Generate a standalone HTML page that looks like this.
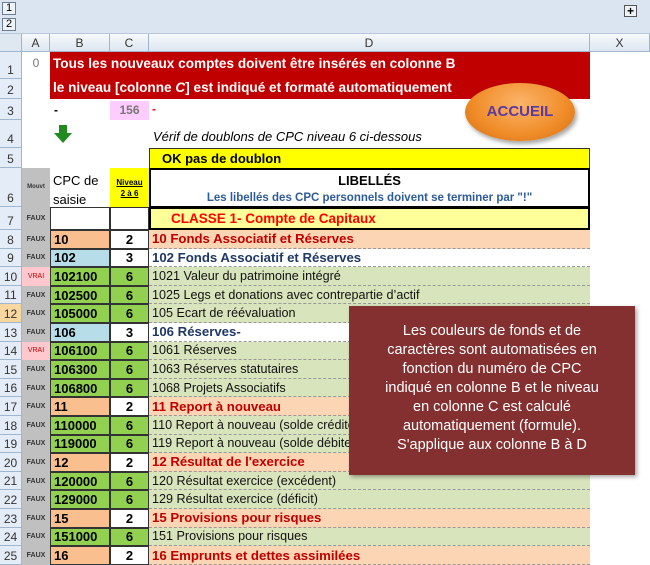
<!DOCTYPE html>
<html><head><meta charset="utf-8"><style>
*{margin:0;padding:0;box-sizing:border-box}
body{width:650px;height:565px;overflow:hidden;background:#fff;font-family:"Liberation Sans",Arial,sans-serif;position:relative}
.a{position:absolute}
.top{left:0;top:0;width:650px;height:34px;background:#dbe5f1;border-bottom:1px solid #b8c8dc}
.ob{position:absolute;left:2px;width:14px;height:13px;border:1px solid #6b7c93;background:#eef3f9;font-size:11px;text-align:center;line-height:11px}
.ch{top:34px;height:18px;background:linear-gradient(#f7f9fc,#dde6f1);border-right:1px solid #9eb6ce;border-bottom:1px solid #9eb6ce;font-size:12px;color:#333;text-align:center;line-height:18px}
.rh{left:0;width:22px;background:#e4ecf7;border-bottom:1px solid #9eb6ce;border-right:1px solid #9eb6ce;font-size:12px;color:#333;text-align:center;display:flex;align-items:flex-end;justify-content:center;padding-bottom:1px}
.A{left:22px;width:28px;background:#c0c0c0;font-size:7px;color:#333;text-align:center;font-weight:bold}
.B{left:50px;width:60px;border:1px solid #333;font-size:13px;font-weight:bold;padding-left:3px}
.C{left:110px;width:39px;border:1px solid #333;background:#fff;font-size:13px;font-weight:bold;text-align:center}
.D{left:149px;width:441px;border-bottom:1px dashed #999;font-size:12.6px;padding-left:3px;white-space:nowrap}
.r{display:flex;align-items:center}
.g{background:#92d050}.bl{background:#b7dee8}.o{background:#fabf8f}
.dg{background:#d8e4bc;color:#111}.do{background:#fcd5b4;color:#c00000;font-weight:bold;font-size:13.2px}.dw{background:#fff;color:#1f3864;font-weight:bold;font-size:13.2px}
</style></head><body>
<div class="a top"></div>
<div class="ob" style="top:2px">1</div>
<div class="ob" style="top:18px">2</div>
<div class="a" style="left:624px;top:5px;width:13px;height:12px;border:1px solid #555;background:#eef3f9;font-size:12px;line-height:10px;text-align:center;font-weight:bold">+</div>

<div class="a ch" style="left:0;width:22px;background:#dfe7f1"></div>
<div class="a ch" style="left:22px;width:28px">A</div>
<div class="a ch" style="left:50px;width:60px">B</div>
<div class="a ch" style="left:110px;width:39px">C</div>
<div class="a ch" style="left:149px;width:441px">D</div>
<div class="a ch" style="left:590px;width:60px">X</div>

<div class="a rh" style="top:52px;height:27px">1</div>
<div class="a rh" style="top:79px;height:20px">2</div>
<div class="a rh" style="top:99px;height:21px">3</div>
<div class="a rh" style="top:120px;height:28px">4</div>
<div class="a rh" style="top:148px;height:20px">5</div>
<div class="a rh" style="top:168px;height:39px">6</div>
<div class="a rh" style="top:207px;height:23px">7</div>

<div class="a" style="left:22px;top:56px;width:28px;text-align:center;font-size:12px;color:#777">0</div>
<div class="a" style="left:50px;top:52px;width:540px;height:47px;background:#c00000"></div>
<div class="a" style="left:53px;top:56px;color:#fff;font-weight:bold;font-size:13.6px;white-space:nowrap">Tous les nouveaux comptes doivent être insérés en colonne B</div>
<div class="a" style="left:53px;top:80px;color:#fff;font-weight:bold;font-size:13.6px;white-space:nowrap">le niveau [colonne <i>C</i>] est indiqué et formaté automatiquement</div>

<div class="a" style="left:54px;top:103px;font-size:12px;font-weight:bold">-</div>
<div class="a" style="left:110px;top:101px;width:39px;height:19px;background:#ffccff;color:#777;font-weight:bold;font-size:12px;text-align:center;line-height:19px">156</div>
<div class="a" style="left:152px;top:102px;color:red;font-weight:bold;font-size:12px">-</div>
<svg class="a" style="left:53px;top:124px" width="20" height="20" viewBox="0 0 20 20"><path d="M6 1h8v8h5l-9 10-9-10h5z" fill="#1f8a1f"/></svg>
<div class="a" style="left:153px;top:129px;font-size:13px;font-style:italic">Vérif de doublons de CPC niveau 6 ci-dessous</div>

<div class="a" style="left:149px;top:148px;width:441px;height:21px;background:#ffff00;border:1px solid #333;font-weight:bold;font-size:13px;padding-left:12px;line-height:19px">OK pas de doublon</div>

<div class="a A" style="top:168px;height:39px;line-height:39px;font-size:6px">Mouvt</div>
<div class="a" style="left:53px;top:171px;font-size:13px;line-height:19px">CPC de<br>saisie</div>
<div class="a" style="left:110px;top:168px;width:39px;height:39px;background:#ffff00;font-size:8px;font-weight:bold;text-decoration:underline;text-align:center;padding-top:9px;line-height:11px">Niveau<br>2 à 6</div>
<div class="a" style="left:149px;top:168px;width:441px;height:40px;border:2px solid #000;background:#fff;text-align:center">
<div style="font-weight:bold;font-size:13px;margin-top:3px">LIBELLÉS</div>
<div style="font-weight:bold;font-size:11.5px;color:#2e5c99;margin-top:4px">Les libellés des CPC personnels doivent se terminer par "!"</div></div>

<div class="a A r" style="top:207px;height:23px;justify-content:center">FAUX</div>
<div class="a B" style="top:207px;height:23px;background:#fff"></div>
<div class="a C" style="top:207px;height:23px"></div>
<div class="a" style="left:149px;top:207px;width:441px;height:23px;background:#ffff99;border:2px solid #000;color:#f00;font-weight:bold;font-size:13.5px;padding-left:20px;line-height:19px">CLASSE 1- Compte de Capitaux</div>

<div class="a rh" style="top:230px;height:18.6px">8</div><div class="a A r" style="top:230px;height:18.6px;justify-content:center">FAUX</div><div class="a B r o" style="top:230px;height:18.6px">10</div><div class="a C r" style="top:230px;height:18.6px;justify-content:center">2</div><div class="a D r do" style="top:230px;height:18.6px">10 Fonds Associatif et Réserves</div>
<div class="a rh" style="top:248.6px;height:18.6px">9</div><div class="a A r" style="top:248.6px;height:18.6px;justify-content:center">FAUX</div><div class="a B r bl" style="top:248.6px;height:18.6px">102</div><div class="a C r" style="top:248.6px;height:18.6px;justify-content:center">3</div><div class="a D r dw" style="top:248.6px;height:18.6px">102 Fonds Associatif et Réserves</div>
<div class="a rh" style="top:267.2px;height:18.6px">10</div><div class="a A r" style="top:267.2px;height:18.6px;justify-content:center;background:#ffc7ce;color:#c00;font-weight:normal">VRAI</div><div class="a B r g" style="top:267.2px;height:18.6px">102100</div><div class="a C r g" style="top:267.2px;height:18.6px;justify-content:center">6</div><div class="a D r dg" style="top:267.2px;height:18.6px">1021 Valeur du patrimoine intégré</div>
<div class="a rh" style="top:285.8px;height:18.6px">11</div><div class="a A r" style="top:285.8px;height:18.6px;justify-content:center">FAUX</div><div class="a B r g" style="top:285.8px;height:18.6px">102500</div><div class="a C r g" style="top:285.8px;height:18.6px;justify-content:center">6</div><div class="a D r dg" style="top:285.8px;height:18.6px">1025 Legs et donations avec contrepartie d’actif</div>
<div class="a rh" style="top:304.4px;height:18.6px;background:#f8d7a0">12</div><div class="a A r" style="top:304.4px;height:18.6px;justify-content:center">FAUX</div><div class="a B r g" style="top:304.4px;height:18.6px">105000</div><div class="a C r g" style="top:304.4px;height:18.6px;justify-content:center">6</div><div class="a D r dg" style="top:304.4px;height:18.6px">105 Ecart de réévaluation</div>
<div class="a rh" style="top:323px;height:18.6px">13</div><div class="a A r" style="top:323px;height:18.6px;justify-content:center">FAUX</div><div class="a B r bl" style="top:323px;height:18.6px">106</div><div class="a C r" style="top:323px;height:18.6px;justify-content:center">3</div><div class="a D r dw" style="top:323px;height:18.6px">106 Réserves-</div>
<div class="a rh" style="top:341.6px;height:18.6px">14</div><div class="a A r" style="top:341.6px;height:18.6px;justify-content:center;background:#ffc7ce;color:#c00;font-weight:normal">VRAI</div><div class="a B r g" style="top:341.6px;height:18.6px">106100</div><div class="a C r g" style="top:341.6px;height:18.6px;justify-content:center">6</div><div class="a D r dg" style="top:341.6px;height:18.6px">1061 Réserves</div>
<div class="a rh" style="top:360.2px;height:18.6px">15</div><div class="a A r" style="top:360.2px;height:18.6px;justify-content:center">FAUX</div><div class="a B r g" style="top:360.2px;height:18.6px">106300</div><div class="a C r g" style="top:360.2px;height:18.6px;justify-content:center">6</div><div class="a D r dg" style="top:360.2px;height:18.6px">1063 Réserves statutaires</div>
<div class="a rh" style="top:378.8px;height:18.6px">16</div><div class="a A r" style="top:378.8px;height:18.6px;justify-content:center">FAUX</div><div class="a B r g" style="top:378.8px;height:18.6px">106800</div><div class="a C r g" style="top:378.8px;height:18.6px;justify-content:center">6</div><div class="a D r dg" style="top:378.8px;height:18.6px">1068 Projets Associatifs</div>
<div class="a rh" style="top:397.4px;height:18.6px">17</div><div class="a A r" style="top:397.4px;height:18.6px;justify-content:center">FAUX</div><div class="a B r o" style="top:397.4px;height:18.6px">11</div><div class="a C r" style="top:397.4px;height:18.6px;justify-content:center">2</div><div class="a D r do" style="top:397.4px;height:18.6px">11 Report à nouveau</div>
<div class="a rh" style="top:416px;height:18.6px">18</div><div class="a A r" style="top:416px;height:18.6px;justify-content:center">FAUX</div><div class="a B r g" style="top:416px;height:18.6px">110000</div><div class="a C r g" style="top:416px;height:18.6px;justify-content:center">6</div><div class="a D r dg" style="top:416px;height:18.6px">110 Report à nouveau (solde créditeur)</div>
<div class="a rh" style="top:434.6px;height:18.6px">19</div><div class="a A r" style="top:434.6px;height:18.6px;justify-content:center">FAUX</div><div class="a B r g" style="top:434.6px;height:18.6px">119000</div><div class="a C r g" style="top:434.6px;height:18.6px;justify-content:center">6</div><div class="a D r dg" style="top:434.6px;height:18.6px">119 Report à nouveau (solde débiteur)</div>
<div class="a rh" style="top:453.2px;height:18.6px">20</div><div class="a A r" style="top:453.2px;height:18.6px;justify-content:center">FAUX</div><div class="a B r o" style="top:453.2px;height:18.6px">12</div><div class="a C r" style="top:453.2px;height:18.6px;justify-content:center">2</div><div class="a D r do" style="top:453.2px;height:18.6px">12 Résultat de l'exercice</div>
<div class="a rh" style="top:471.8px;height:18.6px">21</div><div class="a A r" style="top:471.8px;height:18.6px;justify-content:center">FAUX</div><div class="a B r g" style="top:471.8px;height:18.6px">120000</div><div class="a C r g" style="top:471.8px;height:18.6px;justify-content:center">6</div><div class="a D r dg" style="top:471.8px;height:18.6px">120 Résultat exercice (excédent)</div>
<div class="a rh" style="top:490.4px;height:18.6px">22</div><div class="a A r" style="top:490.4px;height:18.6px;justify-content:center">FAUX</div><div class="a B r g" style="top:490.4px;height:18.6px">129000</div><div class="a C r g" style="top:490.4px;height:18.6px;justify-content:center">6</div><div class="a D r dg" style="top:490.4px;height:18.6px">129 Résultat exercice (déficit)</div>
<div class="a rh" style="top:509px;height:18.6px">23</div><div class="a A r" style="top:509px;height:18.6px;justify-content:center">FAUX</div><div class="a B r o" style="top:509px;height:18.6px">15</div><div class="a C r" style="top:509px;height:18.6px;justify-content:center">2</div><div class="a D r do" style="top:509px;height:18.6px">15 Provisions pour risques</div>
<div class="a rh" style="top:527.6px;height:18.6px">24</div><div class="a A r" style="top:527.6px;height:18.6px;justify-content:center">FAUX</div><div class="a B r g" style="top:527.6px;height:18.6px">151000</div><div class="a C r g" style="top:527.6px;height:18.6px;justify-content:center">6</div><div class="a D r dg" style="top:527.6px;height:18.6px">151 Provisions pour risques</div>
<div class="a rh" style="top:546.2px;height:18.8px">25</div><div class="a A r" style="top:546.2px;height:18.8px;justify-content:center">FAUX</div><div class="a B r o" style="top:546.2px;height:18.8px">16</div><div class="a C r" style="top:546.2px;height:18.8px;justify-content:center">2</div><div class="a D r do" style="top:546.2px;height:18.8px">16 Emprunts et dettes assimilées</div>

<div class="a" style="left:465px;top:83px;width:110px;height:58px;border-radius:50%;background:radial-gradient(ellipse at 50% 35%,#fbb46a,#f08c28 60%,#d06a10);box-shadow:2px 3px 4px rgba(0,0,0,.35);text-align:center;line-height:58px;color:#5a3aa0;font-weight:bold;font-size:15px">ACCUEIL</div>

<div class="a" style="left:349px;top:306px;width:286px;height:169px;background:#843030;box-shadow:2px 2px 4px rgba(0,0,0,.35);color:#fff;font-size:14.5px;line-height:19px;text-align:center;padding-top:16px">Les couleurs de fonds et de<br>caractères sont automatisées en<br>fonction du numéro de CPC<br>indiqué en colonne B et le niveau<br>en colonne C est calculé<br>automatiquement (formule).<br>S'applique aux colonne B à D</div>
</body></html>
